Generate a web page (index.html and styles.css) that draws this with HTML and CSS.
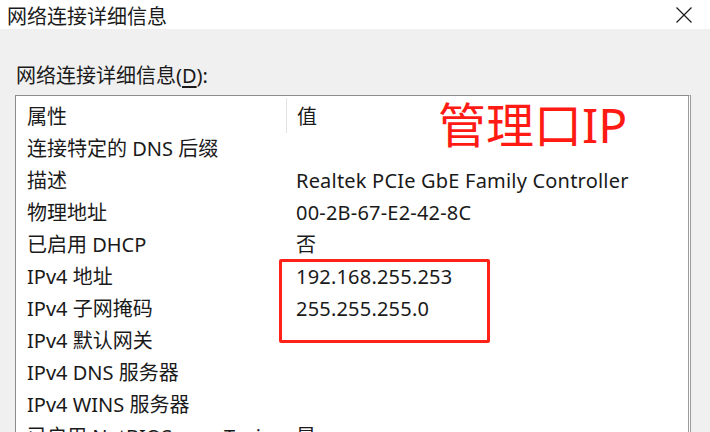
FILE: index.html
```html
<!DOCTYPE html>
<html lang="zh-CN">
<head>
<meta charset="utf-8">
<title>网络连接详细信息</title>
<link rel="stylesheet" href="styles.css">
</head>
<body>
<div class="window">
  <div class="titlebar">
    <span class="title">网络连接详细信息</span>
    <span class="close" aria-label="关闭">
      <svg width="16" height="16" viewBox="0 0 16 16"><path d="M0.5 0.5 L15.5 15.5 M15.5 0.5 L0.5 15.5" stroke="#1a1a1a" stroke-width="1.2" fill="none"/></svg>
    </span>
  </div>
  <div class="content">
    <div class="label">网络连接详细信息(<u>D</u>):</div>
    <div class="listbox">
      <div class="row header"><div class="c1">属性</div><div class="c2">值</div></div>
      <div class="row"><div class="c1">连接特定的 DNS 后缀</div><div class="c2"></div></div>
      <div class="row"><div class="c1">描述</div><div class="c2">Realtek PCIe GbE Family Controller</div></div>
      <div class="row"><div class="c1">物理地址</div><div class="c2">00-2B-67-E2-42-8C</div></div>
      <div class="row"><div class="c1">已启用 DHCP</div><div class="c2">否</div></div>
      <div class="row"><div class="c1">IPv4 地址</div><div class="c2">192.168.255.253</div></div>
      <div class="row"><div class="c1">IPv4 子网掩码</div><div class="c2">255.255.255.0</div></div>
      <div class="row"><div class="c1">IPv4 默认网关</div><div class="c2"></div></div>
      <div class="row"><div class="c1">IPv4 DNS 服务器</div><div class="c2"></div></div>
      <div class="row"><div class="c1">IPv4 WINS 服务器</div><div class="c2"></div></div>
      <div class="row"><div class="c1">已启用 NetBIOS over Tcpip</div><div class="c2">是</div></div>
      <div class="annot-text">管理口IP</div>
      <div class="annot-box"></div>
    </div>
  </div>
</div>
</body>
</html>
```
FILE: styles.css
```css
html, body {
  margin: 0;
  padding: 0;
}
body {
  width: 710px;
  height: 432px;
  overflow: hidden;
  background: #f0f0f0;
  font-family: "Noto Sans", "Noto Sans CJK SC", sans-serif;
  font-size: 20px;
  color: #1a1a1a;
}
.window {
  display: flex;
  flex-direction: column;
  height: 432px;
}
.titlebar {
  height: 39px;
  background: #ffffff;
  display: flex;
  align-items: center;
  justify-content: space-between;
  padding: 5px 18px 0 7px;
  box-sizing: border-box;
}
.title {
  line-height: 24px;
}
.close {
  display: flex;
  width: 16px;
  height: 16px;
  margin-top: -4px;
}
.content {
  flex: 1;
  padding: 35px 19px 0 15px;
}
.label {
  line-height: 24px;
  padding-left: 1px;
  margin-bottom: 7px;
}
.label u {
  text-underline-offset: 3px;
}
.listbox {
  position: relative;
  background: #ffffff;
  border: 1px solid #8c8c8c;
  border-right: 3px double #9a9a9a;
  padding-top: 5px;
  height: 400px;
}
.row {
  display: flex;
  height: 32px;
  align-items: center;
  line-height: 24px;
  white-space: nowrap;
}
.c1 {
  width: 259px;
  padding-left: 11px;
  flex: none;
}
.c2 {
  padding-left: 10px;
  letter-spacing: 0.2px;
}
.header .c1 {
  align-self: stretch;
  display: flex;
  align-items: center;
  margin-top: -3px;
  padding-top: 3px;
  border-right: 1px solid #e3e3e3;
}
.annot-text {
  position: absolute;
  left: 422px;
  top: -1px;
  font-size: 48px;
  line-height: 60px;
  color: #ff1a14;
  white-space: nowrap;
}
.annot-box {
  position: absolute;
  left: 263px;
  top: 163px;
  width: 205px;
  height: 78px;
  border: 3px solid #ff2218;
  border-radius: 2px;
}
```
